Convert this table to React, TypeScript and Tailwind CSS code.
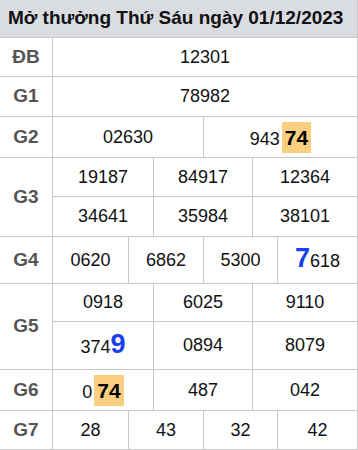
import React from 'react';

type Cell = { w?: string; content: React.ReactNode };

const Hl: React.FC<{ children: React.ReactNode; gap?: string }> = ({ children, gap = 'ml-[2px]' }) => (
  <span className={`${gap} inline-block bg-[#fccf80] px-[3px] text-[21px] font-bold leading-[31px] text-black`}>
    {children}
  </span>
);

const Blue: React.FC<{ children: React.ReactNode }> = ({ children }) => (
  <span className="text-[27px] font-bold leading-none text-[#1a3ff0]">{children}</span>
);

const Line: React.FC<{ cells: Cell[]; h: string; last?: boolean }> = ({ cells, h, last }) => (
  <div className={`flex ${h} ${last ? '' : 'border-b border-[#c8c8c8]'}`}>
    {cells.map((c, i) => (
      <div
        key={i}
        className={`flex items-center justify-center ${c.w ?? 'flex-1'} ${i > 0 ? 'border-l border-[#c8c8c8]' : ''}`}
      >
        {c.content}
      </div>
    ))}
  </div>
);

const Row: React.FC<{ label: string; lines: { h: string; cells: Cell[] }[] }> = ({ label, lines }) => (
  <div className="flex border-b border-[#c8c8c8]">
    <div className="flex w-[53px] shrink-0 items-center justify-center border-r border-[#c8c8c8] text-[19px] font-bold text-[#555]">
      {label}
    </div>
    <div className="flex flex-1 flex-col">
      {lines.map((l, i) => (
        <Line key={i} cells={l.cells} h={l.h} last={i === lines.length - 1} />
      ))}
    </div>
  </div>
);

const three = (a: React.ReactNode, b: React.ReactNode, c: React.ReactNode): Cell[] => [
  { w: 'w-[100px]', content: a },
  { w: 'w-[99px]', content: b },
  { content: c },
];

const four = (a: React.ReactNode, b: React.ReactNode, c: React.ReactNode, d: React.ReactNode): Cell[] => [
  { w: 'w-[75px]', content: a },
  { w: 'w-[75px]', content: b },
  { w: 'w-[74px]', content: c },
  { content: d },
];

export default function App() {
  return (
    <div className="w-[358px] h-[450px] overflow-hidden bg-white font-['Liberation_Sans',Arial,sans-serif] text-[18px] text-[#111]">
      <div className="border-r border-[#c8c8c8]">
        <div className="flex h-[38px] items-center border-b border-[#c8c8c8] bg-[#d9dce1] pl-[8px] text-[19px] font-bold text-[#111]">
          Mở thưởng Thứ Sáu ngày 01/12/2023
        </div>
        <Row label="ĐB" lines={[{ h: 'h-[38px]', cells: [{ content: '12301' }] }]} />
        <Row label="G1" lines={[{ h: 'h-[39px]', cells: [{ content: '78982' }] }]} />
        <Row
          label="G2"
          lines={[
            {
              h: 'h-[40px]',
              cells: [
                { w: 'w-[150px]', content: '02630' },
                { content: <span>943<Hl>74</Hl></span> },
              ],
            },
          ]}
        />
        <Row
          label="G3"
          lines={[
            { h: 'h-[39px]', cells: three('19187', '84917', '12364') },
            { h: 'h-[39px]', cells: three('34641', '35984', '38101') },
          ]}
        />
        <Row label="G4" lines={[{ h: 'h-[46px]', cells: four('0620', '6862', '5300', <span><Blue>7</Blue>618</span>) }]} />
        <Row
          label="G5"
          lines={[
            { h: 'h-[38px]', cells: three('0918', '6025', '9110') },
            { h: 'h-[47px]', cells: three(<span>374<Blue>9</Blue></span>, '0894', '8079') },
          ]}
        />
        <Row
          label="G6"
          lines={[{ h: 'h-[40px]', cells: three(<span>0<Hl>74</Hl></span>, '487', '042') }]}
        />
        <Row label="G7" lines={[{ h: 'h-[38px]', cells: four('28', '43', '32', '42') }]} />
      </div>
    </div>
  );
}
